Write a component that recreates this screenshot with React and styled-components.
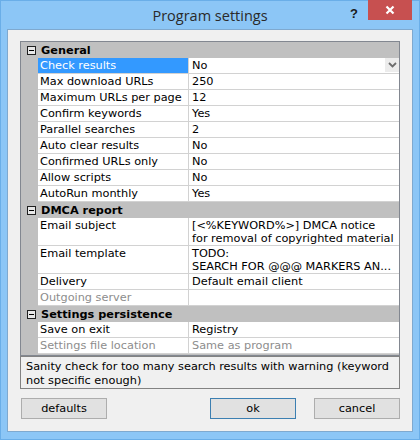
import styled, { createGlobalStyle } from "styled-components";

const GlobalStyle = createGlobalStyle`
  html, body {
    margin: 0;
    padding: 0;
    background: #ffffff;
  }
  * {
    box-sizing: border-box;
  }
`

const Window = styled.div`
  width: 420px;
  height: 440px;
  background: #8cc6f6;
  border: 1px solid #6aaee8;
  display: flex;
  flex-direction: column;
  font-family: "DejaVu Sans", Verdana, sans-serif;
  font-size: 11.3px;
  color: #000;
`

const TitleBar = styled.div`
  height: 29px;
  display: flex;
  align-items: flex-start;
  padding-left: 75px;
`

const Title = styled.div`
  flex: 1;
  text-align: center;
  padding-top: 5px;
  font-family: "Open Sans", "Noto Sans", sans-serif;
  font-size: 14.5px;
  color: #2a2a2a;
`

const HelpButton = styled.div`
  width: 20px;
  height: 20px;
  margin-top: 3px;
  font-family: "Liberation Sans", Arial, sans-serif;
  font-weight: bold;
  font-size: 13px;
  color: #1a1a1a;
  text-align: center;
  line-height: 20px;
  margin-right: 4px;
`

const CloseButton = styled.div`
  width: 44px;
  height: 20px;
  margin-right: 7px;
  margin-top: -1px;
  background: #c75050;
  display: flex;
  align-items: center;
  justify-content: center;
`

const Client = styled.div`
  flex: 1;
  margin: 0 6px 7px 6px;
  background: #f0f0f0;
  border: 1px solid #7fa9cf;
  padding: 11px 12px 12px 12px;
  display: flex;
  flex-direction: column;
`

const Grid = styled.div`
  border: 1px solid #828790;
  display: flex;
  flex-direction: column;
  height: 315px;
  background: #c0c0c0;
`

const Row = styled.div`
  display: grid;
  grid-template-columns: 17px 151px 1fr;
  min-height: ${p => p.tall ? 28 : 16}px;
`

const Gutter = styled.div`
  background: #c0c0c0;
`

const NameCell = styled.div`
  background: ${p => p.selected ? "#3399ff" : "#fff"};
  color: ${p => p.selected ? "#fff" : p.disabled ? "#8d8d8d" : "#000"};
  border-bottom: 1px solid #d2d2d2;
  border-right: 1px solid #d2d2d2;
  padding: 1px 0 0 2px;
  line-height: 13px;
  white-space: nowrap;
  overflow: hidden;
`

const ValueCell = styled.div`
  background: #fff;
  color: ${p => p.disabled ? "#8d8d8d" : "#000"};
  border-bottom: 1px solid #d2d2d2;
  padding: 1px 0 0 3px;
  line-height: 13px;
  white-space: nowrap;
  overflow: hidden;
  display: flex;
  justify-content: space-between;
`

const ValueLines = styled.div`
  display: flex;
  flex-direction: column;
`

const DropButton = styled.div`
  width: 14px;
  height: 14px;
  margin-top: -1px;
  background: #ececec;
  display: flex;
  align-items: center;
  justify-content: center;
`

const HeaderRow = styled.div`
  display: flex;
  align-items: center;
  height: 16px;
  background: #c0c0c0;
  font-weight: bold;
  gap: 5px;
  padding-left: 6px;
`

const Toggle = styled.div`
  width: 9px;
  height: 9px;
  border: 1px solid #202020;
  background: #e8e8e8;
  display: flex;
  align-items: center;
  justify-content: center;
  &::after {
    content: "";
    width: 5px;
    height: 1px;
    background: #000;
  }
`

const Filler = styled.div`
  flex: 1;
  background: #c0c0c0;
`

const Description = styled.div`
  height: 33px;
  border: 1px solid #828282;
  padding: 3px 5px 0 5px;
  line-height: 13.5px;
  color: #000;
`

const ButtonRow = styled.div`
  display: flex;
  margin-top: 9px;
  padding-left: 1px;
`

const Button = styled.div`
  width: 86px;
  height: 21px;
  background: #e1e1e1;
  border: 1px solid ${p => p.primary ? "#3c7fb1" : "#adadad"};
  display: flex;
  align-items: center;
  justify-content: center;
  margin-left: ${p => p.offset || 0}px;
`

const Chevron = () => (
  <svg width="9" height="6" viewBox="0 0 9 6">
    <path d="M1 1 L4.5 4.5 L8 1" stroke="#6d6d6d" strokeWidth="1.8" fill="none" />
  </svg>
)

const sections = [
  {
    title: "General",
    rows: [
      { name: "Check results", value: "No", selected: true, drop: true },
      { name: "Max download URLs", value: "250" },
      { name: "Maximum URLs per page", value: "12" },
      { name: "Confirm keywords", value: "Yes" },
      { name: "Parallel searches", value: "2" },
      { name: "Auto clear results", value: "No" },
      { name: "Confirmed URLs only", value: "No" },
      { name: "Allow scripts", value: "No" },
      { name: "AutoRun monthly", value: "Yes" },
    ],
  },
  {
    title: "DMCA report",
    rows: [
      { name: "Email subject", value: ["[<%KEYWORD%>] DMCA notice", "for removal of copyrighted material"] },
      { name: "Email template", value: ["TODO:", "SEARCH FOR @@@ MARKERS AN..."] },
      { name: "Delivery", value: "Default email client" },
      { name: "Outgoing server", value: "", disabled: true },
    ],
  },
  {
    title: "Settings persistence",
    rows: [
      { name: "Save on exit", value: "Registry" },
      { name: "Settings file location", value: "Same as program", disabled: true },
    ],
  },
]

const App = () => {
  return (
    <>
      <GlobalStyle />
      <Window>
        <TitleBar>
          <Title>Program settings</Title>
          <HelpButton>?</HelpButton>
          <CloseButton>
            <svg width="10" height="10" viewBox="0 0 10 10">
              <path d="M1.5 1.5 L8.5 8.5 M8.5 1.5 L1.5 8.5" stroke="#fff" strokeWidth="2.2" />
            </svg>
          </CloseButton>
        </TitleBar>
        <Client>
          <Grid>
            {sections.map(s => (
              <div key={s.title}>
                <HeaderRow>
                  <Toggle />
                  <span>{s.title}</span>
                </HeaderRow>
                {s.rows.map(r => (
                  <Row key={r.name} tall={Array.isArray(r.value)}>
                    <Gutter />
                    <NameCell selected={r.selected} disabled={r.disabled}>{r.name}</NameCell>
                    <ValueCell disabled={r.disabled}>
                      {Array.isArray(r.value) ? (
                        <ValueLines>
                          {r.value.map(l => <span key={l}>{l}</span>)}
                        </ValueLines>
                      ) : (
                        <span>{r.value}</span>
                      )}
                      {r.drop && <DropButton><Chevron /></DropButton>}
                    </ValueCell>
                  </Row>
                ))}
              </div>
            ))}
            <Filler />
          </Grid>
          <Description>
            Sanity check for too many search results with warning (keyword not specific enough)
          </Description>
          <ButtonRow>
            <Button>defaults</Button>
            <Button primary offset={103}>ok</Button>
            <Button offset={18}>cancel</Button>
          </ButtonRow>
        </Client>
      </Window>
    </>
  )
}

export default App;
